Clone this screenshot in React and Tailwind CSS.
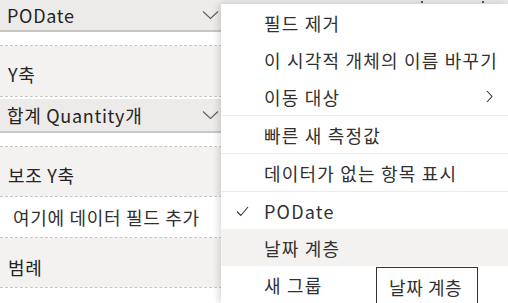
import React from 'react';

const font = { fontFamily: '"Noto Sans CJK KR", "Noto Sans", sans-serif' };

const ChevronDown = () => (
  <svg width="17" height="10" viewBox="0 0 17 10" className="shrink-0">
    <path d="M1 1.5l7.5 7 7.5-7" fill="none" stroke="#605e5c" strokeWidth="1.1" />
  </svg>
);

const Pill = ({ label, h }) => (
  <div className={`flex items-center justify-between pl-[7px] pr-[13px] bg-[#edebe9] border-b-2 border-[#c8c6c4] ${h}`}>
    <span>{label}</span>
    <ChevronDown />
  </div>
);

const Dashed = () => <div className="border-t border-dashed border-[#c8c6c4]" />;

const MenuItem = ({ label, checked, arrow, active }) => (
  <div className={`relative flex items-center h-[37px] pl-[43px] pr-[15px] ${active ? 'bg-[#f3f2f1]' : ''}`}>
    {checked && (
      <svg width="13" height="11" viewBox="0 0 13 11" className="absolute left-[15px] top-[14px]">
        <path d="M1 5.5l3.8 4L12 1" fill="none" stroke="#323130" strokeWidth="1.1" />
      </svg>
    )}
    <span className="flex-1 whitespace-nowrap">{label}</span>
    {arrow && (
      <svg width="7" height="13" viewBox="0 0 7 13">
        <path d="M1 1l5 5.5L1 12" fill="none" stroke="#323130" strokeWidth="1.1" />
      </svg>
    )}
  </div>
);

const Sep = () => <div className="h-px bg-[#edebe9]" />;

export default function App() {
  return (
    <div className="relative w-[508px] h-[303px] overflow-hidden bg-white text-[18px] leading-none text-[#252423]" style={font}>
      {/* field wells */}
      <div className="flex flex-col w-[232px] tracking-[0.7px]">
        <Pill label="PODate" h="h-[32px]" />
        <div className="h-[13px] bg-white" />
        <Dashed />
        <div className="h-[50px] bg-[#f3f2f1] flex items-end pl-[8px] pb-[13px]">Y축</div>
        <Dashed />
        <div className="pt-[2px] bg-white">
          <Pill label="합계 Quantity개" h="h-[34px]" />
        </div>
        <div className="h-[13px] bg-white" />
        <Dashed />
        <div className="h-[49px] bg-[#f3f2f1] flex items-end pl-[8px] pb-[12px]">보조 Y축</div>
        <Dashed />
        <div className="h-[40px] bg-white flex items-center pl-[13px] text-[#323130]">여기에 데이터 필드 추가</div>
        <Dashed />
        <div className="h-[49px] bg-[#f3f2f1] flex items-end pl-[8px] pb-[11px]">범례</div>
        <Dashed />
        <div className="h-[40px] bg-white flex items-center pl-[13px] pt-[28px] text-[#323130]">여기에 데이터 필드 추가</div>
      </div>

      {/* strip behind menu */}
      <div className="absolute left-[221px] top-0 w-[287px] h-[4px] bg-[#e6e6e6]">
        <div className="absolute left-[200px] top-[1px] w-[2px] h-[2px] bg-[#555]" />
        <div className="absolute left-[261px] top-[1px] w-[2px] h-[2px] bg-[#555]" />
      </div>

      {/* context menu */}
      <div className="absolute left-[221px] top-[4px] w-[287px] h-[299px] bg-white text-[#323130] tracking-[1.2px] shadow-[-3px_0_6px_rgba(0,0,0,0.13)]">
        <MenuItem label="필드 제거" />
        <MenuItem label="이 시각적 개체의 이름 바꾸기" />
        <MenuItem label="이동 대상" arrow />
        <Sep />
        <MenuItem label="빠른 새 측정값" />
        <Sep />
        <MenuItem label="데이터가 없는 항목 표시" />
        <Sep />
        <MenuItem label="PODate" checked />
        <MenuItem label="날짜 계층" active />
        <MenuItem label="새 그룹" />
      </div>

      {/* tooltip */}
      <div className="absolute left-[376px] top-[267px] w-[102px] h-[40px] bg-white border border-[#333333] pl-[12px] pt-[10px] text-[#323130] tracking-[0.6px]">
        날짜 계층
      </div>
    </div>
  );
}
